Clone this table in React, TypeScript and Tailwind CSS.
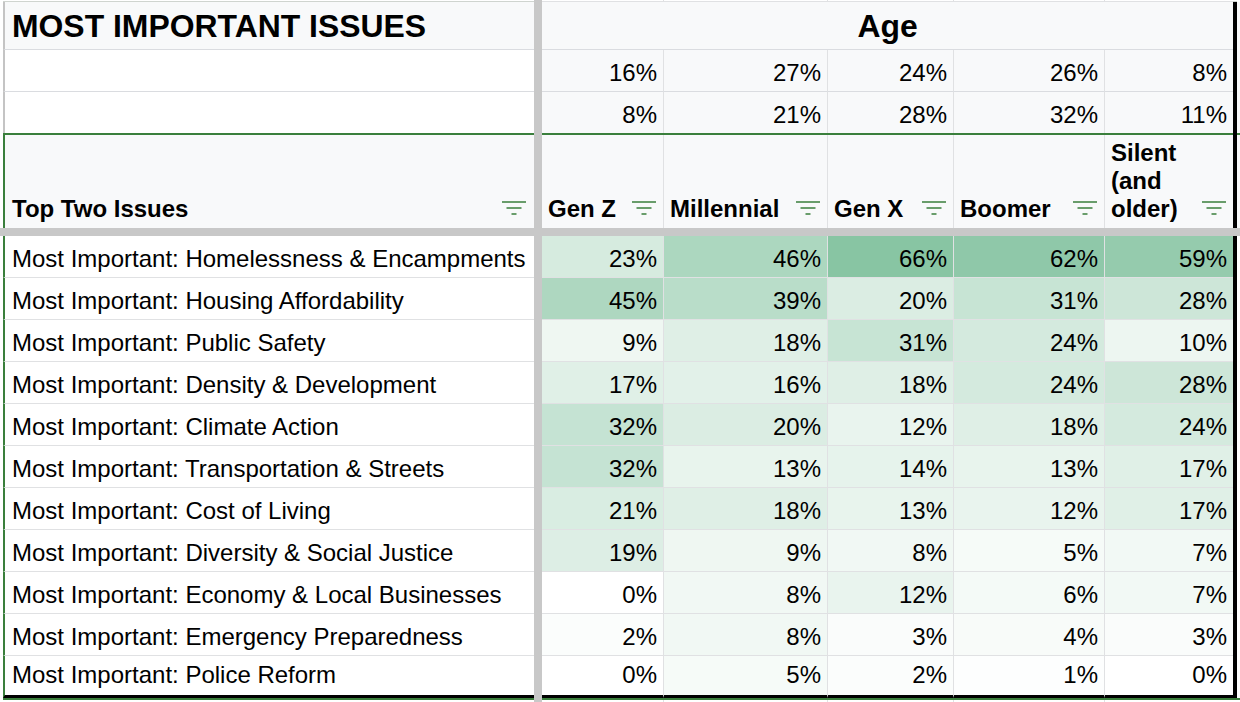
import React from "react";

const GRID = "border-[#e0e1e3]";
const GREEN = "#3a7f3c";

const colCls = [
  "w-[122px] border-r",
  "w-[164px] border-r",
  "w-[126px] border-r",
  "w-[151px] border-r",
  "w-[128px]",
];

const topA = [16, 27, 24, 26, 8];
const topB = [8, 21, 28, 32, 11];

const rows: [string, number[]][] = [
  ["Most Important: Homelessness & Encampments", [23, 46, 66, 62, 59]],
  ["Most Important: Housing Affordability", [45, 39, 20, 31, 28]],
  ["Most Important: Public Safety", [9, 18, 31, 24, 10]],
  ["Most Important: Density & Development", [17, 16, 18, 24, 28]],
  ["Most Important: Climate Action", [32, 20, 12, 18, 24]],
  ["Most Important: Transportation & Streets", [32, 13, 14, 13, 17]],
  ["Most Important: Cost of Living", [21, 18, 13, 12, 17]],
  ["Most Important: Diversity & Social Justice", [19, 9, 8, 5, 7]],
  ["Most Important: Economy & Local Businesses", [0, 8, 12, 6, 7]],
  ["Most Important: Emergency Preparedness", [2, 8, 3, 4, 3]],
  ["Most Important: Police Reform", [0, 5, 2, 1, 0]],
];

const heads = ["Gen Z", "Millennial", "Gen X", "Boomer", "Silent (and older)"];

function heat(v: number) {
  const r = Math.round(255 - 1.8 * v);
  const g = Math.round(255 - 0.88 * v);
  const b = Math.round(255 - 1.39 * v);
  return `rgb(${r},${g},${b})`;
}

function FilterIcon() {
  return (
    <svg width="24" height="16" viewBox="0 0 24 16" className="shrink-0 mb-[7px]">
      <rect x="0" y="1.25" width="24" height="1.5" fill={GREEN} />
      <rect x="4.5" y="7.25" width="15" height="1.5" fill={GREEN} />
      <rect x="9.5" y="13.25" width="5" height="1.5" fill={GREEN} />
    </svg>
  );
}

function Band() {
  return <div className="w-[8px] shrink-0 bg-[#c8c8c8]" />;
}
function Black() {
  return <div className="w-[4px] shrink-0 bg-black" />;
}
function Strip({ cls = "bg-white" }: { cls?: string }) {
  return <div className={`w-[3px] shrink-0 ${cls}`} />;
}

export default function App() {
  return (
    <div className="w-[1240px] h-[702px] overflow-hidden bg-white text-black font-['Liberation_Sans',Arial,Helvetica,sans-serif]">
      {/* top strip */}
      <div className="flex h-[2px]">
        <Strip />
        <div className="w-[531px] shrink-0 border-b border-[#cfd4cf]" />
        <Band />
        {colCls.map((c, i) => (
          <div key={i} className={`${c} shrink-0 border-b border-[#cfd4cf] ${GRID}`} />
        ))}
        <div className="w-[4px] shrink-0 border-b border-[#cfd4cf]" />
        <Strip />
      </div>

      {/* title row */}
      <div className="flex h-[48px]">
        <Strip />
        <div className="w-[531px] shrink-0 border-l-2 border-l-[#c4c4c4] border-b border-b-[#dadce0] bg-[#f8f9fa] flex items-end pl-[7px] pb-[5px]">
          <span className="text-[31.9px] leading-[36px] font-bold">MOST IMPORTANT ISSUES</span>
        </div>
        <Band />
        <div className="w-[691px] shrink-0 border-b border-b-[#dadce0] bg-[#f8f9fa] flex items-end justify-center pb-[5px]">
          <span className="text-[31.9px] leading-[36px] font-bold">Age</span>
        </div>
        <Black />
        <Strip cls="bg-[#f8f9fa]" />
      </div>

      {/* row 2 & 3 */}
      {[topA, topB].map((vals, ri) => (
        <div key={ri} className={`flex ${ri === 0 ? "h-[42px]" : "h-[41px]"}`}>
          <Strip />
          <div
            className={`w-[531px] shrink-0 border-l-2 border-l-[#c4c4c4] bg-white ${
              ri === 0 ? "border-b border-b-[#dadce0]" : ""
            }`}
          />
          <Band />
          {vals.map((v, i) => (
            <div
              key={i}
              className={`${colCls[i]} ${GRID} shrink-0 bg-[#f8f9fa] flex items-end justify-end pr-[6px] pb-[4px] text-[24px] leading-[28px] ${
                ri === 0 ? "border-b border-b-[#dadce0]" : ""
              }`}
            >
              {v}%
            </div>
          ))}
          <Black />
          <Strip cls="bg-[#f8f9fa]" />
        </div>
      ))}

      {/* green top line of filter range */}
      <div className="flex h-[2px]">
        <Strip />
        <div className="w-[531px] shrink-0 bg-[#3a7f3c]" />
        <Band />
        <div className="w-[691px] shrink-0 bg-[#3a7f3c]" />
        <Black />
        <Strip cls="bg-[#3a7f3c]" />
      </div>

      {/* header row */}
      <div className="flex h-[93px]">
        <Strip />
        <div className="w-[531px] shrink-0 border-l-2 border-l-[#3a7f3c] bg-[#f8f9fa] flex items-end justify-between pl-[7px] pr-[8px] pb-[5px]">
          <span className="text-[24px] leading-[28px] font-bold">Top Two Issues</span>
          <FilterIcon />
        </div>
        <Band />
        {heads.map((h, i) => (
          <div
            key={i}
            className={`${colCls[i]} ${GRID} shrink-0 bg-[#f8f9fa] flex items-end pl-[6px] pr-[7px] pb-[5px] gap-[4px]`}
          >
            <span className="flex-1 min-w-0 text-[24px] leading-[28px] font-bold">{h}</span>
            <FilterIcon />
          </div>
        ))}
        <Black />
        <Strip cls="bg-[#f8f9fa]" />
      </div>

      {/* frozen horizontal band */}
      <div className="h-[8px] bg-[#c8c8c8]" />

      {/* data rows */}
      {rows.map(([label, vals], ri) => {
        const last = ri === rows.length - 1;
        const bb = last
          ? "border-b-[3px] border-b-black pb-[6px]"
          : "border-b border-b-[#e0e1e3] pb-[4px]";
        return (
          <div key={ri} className="flex h-[42px]">
            <Strip />
            <div
              className={`w-[531px] shrink-0 border-l-2 border-l-[#3a7f3c] ${bb} bg-white flex items-end pl-[7px] text-[24px] leading-[28px] whitespace-nowrap`}
            >
              {label}
            </div>
            <Band />
            {vals.map((v, i) => (
              <div
                key={i}
                className={`${colCls[i]} ${GRID} ${bb} shrink-0 flex items-end justify-end pr-[6px] text-[24px] leading-[28px]`}
                style={{ backgroundColor: heat(v) }}
              >
                {v}%
              </div>
            ))}
            <Black />
            <Strip />
          </div>
        );
      })}

      {/* green bottom line */}
      <div className="flex h-[2px]">
        <Strip />
        <div className="w-[531px] shrink-0 bg-[#3a7f3c]" />
        <Band />
        <div className="w-[698px] shrink-0 bg-[#3a7f3c]" />
      </div>
      <div className="flex h-[2px]">
        <Strip />
        <div className="w-[531px] shrink-0" />
        <Band />
        {colCls.map((c, i) => (
          <div key={i} className={`${c} ${GRID} shrink-0`} />
        ))}
      </div>
    </div>
  );
}
